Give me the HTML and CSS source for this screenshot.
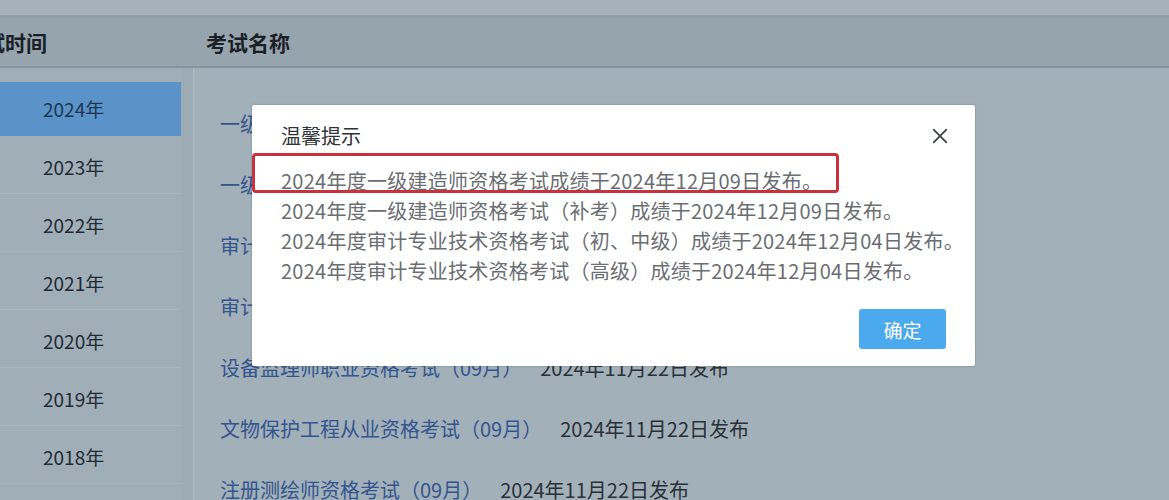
FILE: index.html
```html
<!DOCTYPE html>
<html lang="zh-CN">
<head>
<meta charset="utf-8">
<title>成绩查询</title>
<link rel="stylesheet" href="styles.css">
</head>
<body>
<div class="page">
  <div class="topband"></div>
  <div class="thead">
    <div class="th th-time">考试时间</div>
    <div class="th th-name">考试名称</div>
  </div>
  <div class="tbody">
    <ul class="years">
      <li class="active">2024年</li>
      <li>2023年</li>
      <li>2022年</li>
      <li>2021年</li>
      <li>2020年</li>
      <li>2019年</li>
      <li>2018年</li>
    </ul>
    <div class="divider"></div>
    <ul class="exams">
      <li><a>一级建造师资格考试</a><span class="date">2024年12月09日发布</span></li>
      <li><a>一级建造师资格考试（补考）</a><span class="date">2024年12月09日发布</span></li>
      <li><a>审计专业技术资格考试（初、中级）</a><span class="date">2024年12月04日发布</span></li>
      <li><a>审计专业技术资格考试（高级）</a><span class="date">2024年12月04日发布</span></li>
      <li><a>设备监理师职业资格考试（09月）</a><span class="date">2024年11月22日发布</span></li>
      <li><a>文物保护工程从业资格考试（09月）</a><span class="date">2024年11月22日发布</span></li>
      <li><a>注册测绘师资格考试（09月）</a><span class="date">2024年11月22日发布</span></li>
    </ul>
  </div>

  <div class="dialog">
    <div class="dlg-head">
      <span class="dlg-title">温馨提示</span>
      <svg class="dlg-close" viewBox="0 0 20 20" width="20" height="20">
        <path d="M3 3 L17 17 M17 3 L3 17" stroke="#3f4448" stroke-width="2" stroke-linecap="round" fill="none"/>
      </svg>
    </div>
    <div class="dlg-body">
      <p>2024年度一级建造师资格考试成绩于2024年12月09日发布。</p>
      <p>2024年度一级建造师资格考试（补考）成绩于2024年12月09日发布。</p>
      <p>2024年度审计专业技术资格考试（初、中级）成绩于2024年12月04日发布。</p>
      <p>2024年度审计专业技术资格考试（高级）成绩于2024年12月04日发布。</p>
    </div>
    <div class="dlg-foot">
      <button class="btn-ok">确定</button>
    </div>
    <div class="mark"></div>
  </div>
</div>
</body>
</html>
```

FILE: styles.css
```css
html, body {
  margin: 0;
  padding: 0;
}
body {
  width: 1169px;
  height: 500px;
  overflow: hidden;
  background: #a1afb8;
  font-family: "Noto Sans CJK SC", "Noto Sans", sans-serif;
}
.page {
  position: relative;
  width: 1169px;
  height: 500px;
  overflow: hidden;
  background: #a1afb8;
}
.topband {
  height: 15px;
  background: #a5b2b9;
  border-bottom: 3px solid #909ea8;
}
.thead {
  display: flex;
  height: 48px;
  background: #96a4ae;
  border-bottom: 2px solid #8795a0;
  align-items: center;
}
.th {
  font-size: 21px;
  font-weight: bold;
  color: #1b2027;
}
.th-time {
  width: 206px;
  text-indent: -37px;
  overflow: hidden;
  white-space: nowrap;
}
.th-name {
  flex: 1;
}
.tbody {
  display: flex;
  height: 440px;
}
.years {
  list-style: none;
  margin: 0;
  padding: 14px 0 0 0;
  width: 181px;
  background: #a0aeb8;
}
.years li {
  height: 54px;
  margin-bottom: 4px;
  line-height: 54px;
  padding-left: 43px;
  font-size: 19px;
  color: #1f2a34;
  border-bottom: 1px solid #a9b6be;
  box-sizing: border-box;
}
.years li.active {
  background: #5a93c8;
  color: #1d3553;
  border-bottom: none;
}
.divider {
  width: 12px;
  background: #9dabb4;
  border-right: 1px solid #b3bfc6;
}
.exams {
  list-style: none;
  margin: 0;
  padding: 25px 0 0 26px;
  flex: 1;
  background: #a2b0b9;
}
.exams li {
  height: 61px;
  line-height: 61px;
  font-size: 20px;
  white-space: nowrap;
}
.exams a {
  color: #34558e;
}
.exams .date {
  margin-left: 18px;
  color: #2a3038;
}

.dialog {
  position: absolute;
  left: 252px;
  top: 105px;
  width: 723px;
  height: 261px;
  box-sizing: border-box;
  background: #ffffff;
  border-radius: 2px;
  box-shadow: 0 0 2px rgba(60, 70, 80, 0.5);
  padding: 19px 29px 17px 29px;
  display: flex;
  flex-direction: column;
}
.dlg-head {
  display: flex;
  align-items: center;
  justify-content: space-between;
  height: 24px;
}
.dlg-title {
  font-size: 20px;
  line-height: 24px;
  color: #2e3338;
}
.dlg-close {
  width: 18px;
  height: 18px;
  margin-right: -3px;
}
.dlg-body {
  margin-top: 18px;
}
.dlg-body p {
  margin: 0;
  font-size: 20px;
  line-height: 30px;
  letter-spacing: 0.25px;
  color: #6a6e72;
  white-space: nowrap;
}
.dlg-foot {
  margin-top: auto;
  display: flex;
  justify-content: flex-end;
}
.btn-ok {
  width: 87px;
  height: 40px;
  border: none;
  border-radius: 3px;
  background: #4ba9ee;
  color: #ffffff;
  font-family: "Noto Sans CJK SC", sans-serif;
  font-size: 19px;
  padding: 0;
}
.mark {
  position: absolute;
  left: 0;
  top: 48px;
  width: 587px;
  height: 40px;
  box-sizing: border-box;
  border: 3px solid #c7323d;
  border-radius: 4px;
}
```
